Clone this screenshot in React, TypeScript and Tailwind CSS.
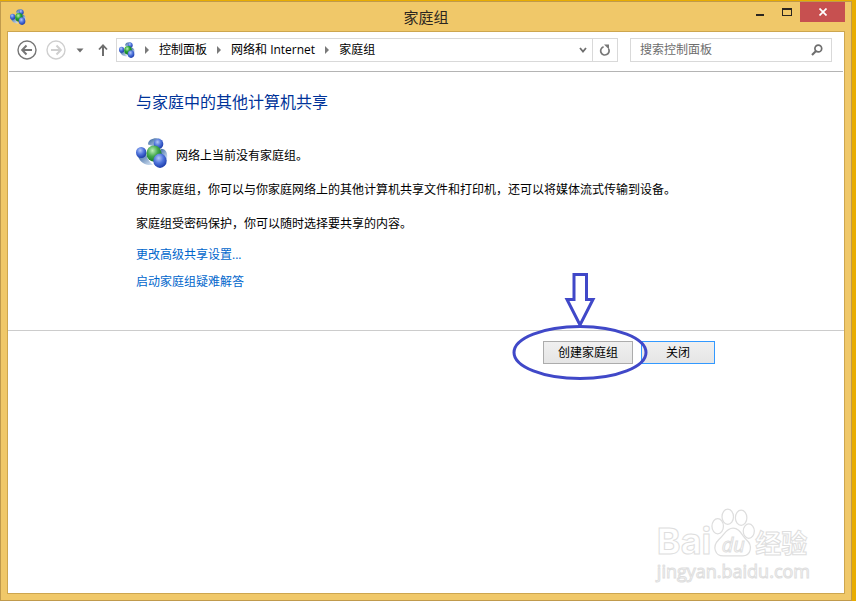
import { useState } from 'react';

const inkColor = '#4048c8';

function HomeGroupIcon({ className, small }: { className?: string; small?: boolean }) {
  const id = small ? 's' : 'l';
  return (
    <svg viewBox="0 0 32 28" preserveAspectRatio="none" className={className} aria-hidden="true">
      <defs>
        <radialGradient id={`blue-${id}`} cx="0.4" cy="0.32" r="0.7">
          <stop offset="0" stopColor="#b4c8f8" />
          <stop offset="0.5" stopColor="#4f74dc" />
          <stop offset="1" stopColor="#1a3aa8" />
        </radialGradient>
        <radialGradient id={`green-${id}`} cx="0.4" cy="0.32" r="0.7">
          <stop offset="0" stopColor="#bdf0b8" />
          <stop offset="0.5" stopColor={small ? '#22a02c' : '#45a94e'} />
          <stop offset="1" stopColor="#0f7426" />
        </radialGradient>
        <linearGradient id={`band-${id}`} x1="0" x2="1" y1="0" y2="1">
          <stop offset="0" stopColor="#2d5d9c" />
          <stop offset="1" stopColor="#dce9f7" />
        </linearGradient>
      </defs>
      <path d="M12 6 C12 1 19 -1 25 1 C20 2 19 5 18 8 Z" fill={`url(#band-${id})`} />
      <path d="M25 10 C30 10 32 14 31 20 C29 17 26 16 23 17 Z" fill={`url(#band-${id})`} />
      <path d="M2 17 C4 23 10 26 17 25 C13 22 11 19 10 14 Z" fill={`url(#band-${id})`} />
      <circle cx="22.5" cy="5.5" r="4.8" fill={`url(#blue-${id})`} />
      <circle cx="5.2" cy="13.5" r="5.2" fill={`url(#blue-${id})`} />
      <circle cx="18" cy="14.5" r="7.6" fill={`url(#green-${id})`} />
      <circle cx="24" cy="21.2" r="6.7" fill={`url(#blue-${id})`} />
    </svg>
  );
}

function RoundArrow({ flip, color }: { flip?: boolean; color: string }) {
  return (
    <svg width="20" height="20" viewBox="0 0 20 20" fill="none" stroke={color} aria-hidden="true">
      <circle cx="10" cy="10" r="9" strokeWidth="1.4" />
      <g transform={flip ? 'rotate(180 10 10)' : undefined}>
        <path d="M5.5 10 H15" strokeWidth="2" />
        <path d="M9.5 5.5 L5.2 10 L9.5 14.5" strokeWidth="2" />
      </g>
    </svg>
  );
}

function CrumbArrow() {
  return (
    <svg width="24" height="8" viewBox="0 0 24 8" aria-hidden="true">
      <path d="M10 0 L14 4 L10 8 Z" fill="#7a7a7a" />
    </svg>
  );
}

function TitleBar() {
  return (
    <header className="relative flex h-[29px] shrink-0 items-center justify-between pl-[9px]">
      <HomeGroupIcon small className="h-4 w-4" />
      <h1 className="absolute inset-x-0 text-center text-[15px] leading-5 text-[#2b2620]">家庭组</h1>
      <div className="relative mr-[6px] flex h-5 self-start">
        <button aria-label="最小化" className="flex w-7 justify-center">
          <svg width="28" height="20" aria-hidden="true">
            <rect x="10" y="12" width="8" height="2" fill="#2b2620" />
          </svg>
        </button>
        <button aria-label="最大化" className="flex w-[26px] justify-center">
          <svg width="26" height="20" aria-hidden="true">
            <path d="M8 6 H18 V14 H8 Z M9 8 V13 H17 V8 Z" fill="#2b2620" fillRule="evenodd" />
          </svg>
        </button>
        <button aria-label="关闭窗口" className="flex w-[45px] items-center justify-center bg-[#c75050]">
          <svg width="8" height="8" viewBox="0 0 8 8" aria-hidden="true">
            <path d="M0.5 0.5 L7.5 7.5 M7.5 0.5 L0.5 7.5" stroke="#fff" strokeWidth="1.7" />
          </svg>
        </button>
      </div>
    </header>
  );
}

function NavBar() {
  const [query, setQuery] = useState('');
  const crumbs = ['控制面板', '网络和 Internet', '家庭组'];

  return (
    <nav className="mx-px flex items-center border-b border-[#b4b4b4] pt-[6px] pr-[11px] pb-[9px] pl-2">
      <button aria-label="后退"><RoundArrow color="#767676" /></button>
      <button aria-label="前进" className="ml-[9px]"><RoundArrow flip color="#cfcfcf" /></button>
      <button aria-label="最近浏览的位置" className="ml-[10px]">
        <svg width="8" height="5" viewBox="0 0 8 5" aria-hidden="true">
          <path d="M0.5 0.5 H7.5 L4 4.5 Z" fill="#6e6e6e" />
        </svg>
      </button>
      <button aria-label="上移" className="ml-[14px]">
        <svg width="10" height="12" viewBox="0 0 10 12" fill="none" stroke="#6e6e6e" aria-hidden="true">
          <path d="M5 12 V1.5" strokeWidth="2" />
          <path d="M1 5.5 L5 1.3 L9 5.5" strokeWidth="1.8" />
        </svg>
      </button>

      <div className="ml-2 flex h-6 min-w-0 flex-1 items-stretch border border-[#d9d9d9]">
        <div className="flex min-w-0 flex-1 items-center pl-[2px]">
          <HomeGroupIcon small className="h-4 w-4 shrink-0" />
          <ol className="flex items-center whitespace-nowrap">
            {crumbs.map((crumb) => (
              <li key={crumb} className="flex items-center">
                <CrumbArrow />
                <a href="#" className="text-xs text-black">{crumb}</a>
              </li>
            ))}
          </ol>
        </div>
        <button aria-label="以前的位置" className="flex w-[18px] items-center justify-center">
          <svg width="8" height="6" viewBox="0 0 8 6" aria-hidden="true">
            <path d="M1 1 L4 4.5 L7 1" fill="none" stroke="#6e6e6e" strokeWidth="1.8" />
          </svg>
        </button>
        <button aria-label="刷新" className="flex w-[25px] items-center justify-center border-l border-[#d9d9d9]">
          <svg width="12" height="12" viewBox="0 0 12 12" aria-hidden="true">
            <path d="M9.6 4.8 A4.2 4.2 0 1 1 4.6 2.8" fill="none" stroke="#777" strokeWidth="1.7" />
            <path d="M5 0.5 H10 V5.5 Z" fill="#777" />
          </svg>
        </button>
      </div>

      <div className="ml-3 flex h-6 w-[202px] items-center border border-[#d9d9d9] pr-2 pl-[9px]">
        <input
          type="text"
          aria-label="搜索控制面板"
          placeholder="搜索控制面板"
          value={query}
          onChange={(e) => setQuery(e.target.value)}
          className="min-w-0 flex-1 text-xs outline-none placeholder:text-[#6d6d6d]"
        />
        <button aria-label="搜索">
          <svg width="12" height="12" viewBox="0 0 12 12" fill="none" stroke="#6e6e6e" aria-hidden="true">
            <circle cx="7.3" cy="4.5" r="3.4" strokeWidth="1.7" />
            <path d="M5 7 L1 11" strokeWidth="2.2" />
          </svg>
        </button>
      </div>
    </nav>
  );
}

// Hand drawn arrow and circle around the create button
function Annotation() {
  return (
    <svg
      width="136"
      height="108"
      viewBox="0 0 136 108"
      fill="none"
      stroke={inkColor}
      strokeWidth="3"
      className="pointer-events-none absolute -top-[69px] -left-[31px] max-w-none"
      aria-hidden="true"
    >
      <path d="M62 2.5 H74.5 V27.5 H81 L68 53 L55 27.5 H62 Z" />
      <ellipse cx="68" cy="80.5" rx="66" ry="26" />
    </svg>
  );
}

function Watermark() {
  return (
    <div className="pointer-events-none absolute right-[34px] bottom-[10px] font-['Open_Sans','Noto_Sans_CJK_SC',sans-serif] text-white [-webkit-text-stroke:1px_#dedede]">
      <div className="flex items-end">
        <span className="font-['Inter',sans-serif] text-4xl leading-9 font-bold">Bai</span>
        <span className="relative">
          <svg width="44" height="52" viewBox="0 0 46 52" fill="#fff" stroke="#dedede" strokeWidth="1.3" aria-hidden="true">
            <ellipse cx="7" cy="19" rx="6" ry="8" />
            <ellipse cx="17.5" cy="9" rx="6" ry="8" />
            <ellipse cx="31.5" cy="10" rx="6" ry="8" />
            <ellipse cx="39.5" cy="24" rx="5.8" ry="7.5" />
            <path d="M23 21 C30 21 32 28 37 33 C44 39 42 50 33 50 H13 C4 50 1 40 8 33 C14 28 16 21 23 21 Z" />
          </svg>
          <span className="absolute inset-x-0 bottom-0 text-center text-xl leading-7 italic">du</span>
        </span>
        <span className="text-[26px] leading-8 font-bold">经验</span>
      </div>
      <div className="text-lg leading-6">jingyan.baidu.com</div>
    </div>
  );
}

export default function App() {
  return (
    <div className="flex min-h-screen bg-[#e8ac00] pt-px pr-1 font-['Open_Sans','Noto_Sans_CJK_SC',sans-serif] text-xs">
      <div className="flex flex-1 flex-col border border-[#c09a4c] bg-[#f0c869]">
        <TitleBar />
        <div className="relative mx-[6px] mb-[6px] flex flex-1 flex-col border border-[#cda64f] bg-white">
          <NavBar />

          <main className="px-32">
            <h2 className="pt-[18px] text-base leading-6 text-[#003399]">与家庭中的其他计算机共享</h2>
            <div className="mt-6 flex items-center gap-2">
              <HomeGroupIcon className="h-[30px] w-8" />
              <p className="pt-[6px] leading-4">网络上当前没有家庭组。</p>
            </div>
            <p className="mt-3 leading-5">
              使用家庭组，你可以与你家庭网络上的其他计算机共享文件和打印机，还可以将媒体流式传输到设备。
            </p>
            <p className="mt-[14px] leading-5">家庭组受密码保护，你可以随时选择要共享的内容。</p>
            <ul className="mt-[11px] mb-[38px] space-y-[7px] leading-5 text-[#0066cc]">
              <li><a href="#">更改高级共享设置...</a></li>
              <li><a href="#">启动家庭组疑难解答</a></li>
            </ul>
          </main>

          <footer className="flex justify-end gap-2 border-t border-[#ccc] px-[129px] pt-[10px]">
            <div className="relative">
              <button className="block h-[23px] w-[90px] border border-[#acacac] bg-linear-to-b from-[#f0f0f0] to-[#e5e5e5]">
                创建家庭组
              </button>
              <Annotation />
            </div>
            <button className="block h-[23px] w-[74px] border border-[#3399ff] bg-linear-to-b from-[#f0f0f0] to-[#e5e5e5]">
              关闭
            </button>
          </footer>

          <Watermark />
        </div>
      </div>
    </div>
  );
}
